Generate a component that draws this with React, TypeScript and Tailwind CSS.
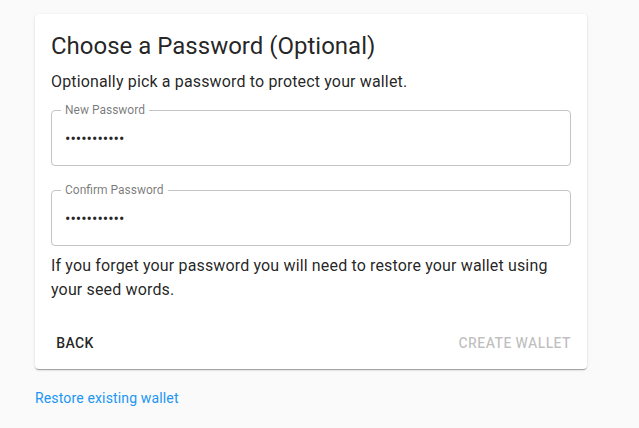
import { useState } from "react";

interface PasswordFieldProps {
  label: string;
  value: string;
  onChange: (value: string) => void;
  className?: string;
}

function PasswordField({ label, value, onChange, className }: PasswordFieldProps) {
  return (
    <div className={`relative h-14 rounded border border-[#c4c4c4] ${className ?? ""}`}>
      <span className="absolute -top-[7px] left-[9px] bg-white px-1 text-xs leading-3 text-[rgba(0,0,0,0.54)]">
        {label}
      </span>
      <input
        type="password"
        value={value}
        onChange={(event) => onChange(event.target.value)}
        className="h-full w-full bg-transparent px-[13px] text-base text-[rgba(0,0,0,0.87)] outline-none"
        aria-label={label}
      />
    </div>
  );
}

export default function App() {
  const [password, setPassword] = useState("hunter12345");
  const [confirm, setConfirm] = useState("hunter12345");

  return (
    <div className="min-h-[428px] bg-[#fafafa] px-[35px] pt-[14px] font-['Roboto',sans-serif]">
      <div className="w-[552px] rounded bg-white shadow-[0px_2px_1px_-1px_rgba(0,0,0,0.2),0px_1px_1px_0px_rgba(0,0,0,0.14),0px_1px_3px_0px_rgba(0,0,0,0.12)]">
        <div className="px-4 pt-4">
          <h1 className="text-2xl leading-8 text-[rgba(0,0,0,0.87)]">Choose a Password (Optional)</h1>
          <p className="mt-2 text-base leading-6 tracking-[0.00938em] text-[rgba(0,0,0,0.87)]">
            Optionally pick a password to protect your wallet.
          </p>
          <PasswordField label="New Password" value={password} onChange={setPassword} className="mt-4" />
          <PasswordField label="Confirm Password" value={confirm} onChange={setConfirm} className="mt-6" />
          <p className="mt-2 pb-4 text-base leading-6 tracking-[0.00938em] text-[rgba(0,0,0,0.87)]">
            If you forget your password you will need to restore your wallet using your seed words.
          </p>
        </div>
        <div className="flex items-center justify-between px-2 pt-[7px] pb-2">
          <button
            type="button"
            className="h-9 min-w-16 rounded px-2 text-sm font-medium uppercase tracking-[0.02857em] text-[rgba(0,0,0,0.87)]"
          >
            Back
          </button>
          <button
            type="button"
            disabled
            className="h-9 min-w-16 rounded px-2 text-sm font-medium uppercase tracking-[0.02857em] text-[rgba(0,0,0,0.26)]"
          >
            Create Wallet
          </button>
        </div>
      </div>
      <a href="#" className="mt-[19px] block w-max text-sm leading-5 tracking-[0.01071em] text-[#2196f3]">
        Restore existing wallet
      </a>
    </div>
  );
}
